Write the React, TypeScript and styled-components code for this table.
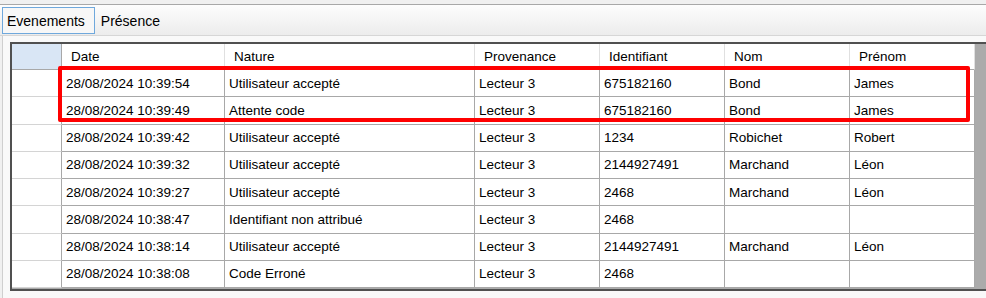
import styled, { createGlobalStyle, css } from "styled-components";

type EventRow = {
  date: string;
  nature: string;
  provenance: string;
  identifiant: string;
  nom: string;
  prenom: string;
};

const columns = ["Date", "Nature", "Provenance", "Identifiant", "Nom", "Prénom"];

const rows: EventRow[] = [
  { date: "28/08/2024 10:39:54", nature: "Utilisateur accepté", provenance: "Lecteur 3", identifiant: "675182160", nom: "Bond", prenom: "James" },
  { date: "28/08/2024 10:39:49", nature: "Attente code", provenance: "Lecteur 3", identifiant: "675182160", nom: "Bond", prenom: "James" },
  { date: "28/08/2024 10:39:42", nature: "Utilisateur accepté", provenance: "Lecteur 3", identifiant: "1234", nom: "Robichet", prenom: "Robert" },
  { date: "28/08/2024 10:39:32", nature: "Utilisateur accepté", provenance: "Lecteur 3", identifiant: "2144927491", nom: "Marchand", prenom: "Léon" },
  { date: "28/08/2024 10:39:27", nature: "Utilisateur accepté", provenance: "Lecteur 3", identifiant: "2468", nom: "Marchand", prenom: "Léon" },
  { date: "28/08/2024 10:38:47", nature: "Identifiant non attribué", provenance: "Lecteur 3", identifiant: "2468", nom: "", prenom: "" },
  { date: "28/08/2024 10:38:14", nature: "Utilisateur accepté", provenance: "Lecteur 3", identifiant: "2144927491", nom: "Marchand", prenom: "Léon" },
  { date: "28/08/2024 10:38:08", nature: "Code Erroné", provenance: "Lecteur 3", identifiant: "2468", nom: "", prenom: "" },
];

const App = () => {
  return (
    <>
      <GlobalStyle />
      <Window>
        <TabStrip>
          <Tab selected>Evenements</Tab>
          <Tab>Présence</Tab>
        </TabStrip>
        <TabPage>
          <GridFrame>
            <Grid>
              <CornerCell />
              {columns.map((c) => (
                <HeaderCell key={c}>{c}</HeaderCell>
              ))}
              {rows.map((r, i) => (
                <RowGroup key={i} row={r} />
              ))}
            </Grid>
            <Highlight />
          </GridFrame>
        </TabPage>
      </Window>
    </>
  );
};

const RowGroup = ({ row }: { row: EventRow }) => {
  return (
    <>
      <RowHeaderCell />
      <Cell>{row.date}</Cell>
      <Cell>{row.nature}</Cell>
      <Cell>{row.provenance}</Cell>
      <Cell>{row.identifiant}</Cell>
      <Cell>{row.nom}</Cell>
      <Cell>{row.prenom}</Cell>
    </>
  );
};

const GlobalStyle = createGlobalStyle`
  html, body {
    margin: 0;
    padding: 0;
    width: 986px;
    height: 298px;
    overflow: hidden;
    background: #f0f0f0;
    font-family: "Liberation Sans", Arial, sans-serif;
    color: #000;
  }
`;

const Window = styled.div`
  width: 986px;
  height: 298px;
  padding-top: 4px;
  box-sizing: border-box;
  display: flex;
  flex-direction: column;
`;

const TabStrip = styled.div`
  height: 32px;
  box-sizing: border-box;
  border-top: 1px solid #a8a8a8;
  border-bottom: 1px solid #d6d6d6;
  background: linear-gradient(#fdfdfd, #ececec);
  display: flex;
  align-items: flex-start;
  padding: 2px 0 0 2px;
`;

const Tab = styled.div<{ selected?: boolean }>`
  height: 27px;
  box-sizing: border-box;
  padding: 0 9px 0 4px;
  display: flex;
  align-items: center;
  font-size: 14px;
  border: 1px solid transparent;
  ${(props) =>
    props.selected
      ? css`
          border-color: #6fa8dc;
          background: #f7f7f7;
        `
      : css`
          padding-left: 5px;
        `}
`;

const TabPage = styled.div`
  flex: 1;
  margin-left: 2px;
  border-left: 1px solid #cfcfcf;
  background: #f9f9f9;
  padding: 6px 0 0 7px;
  overflow: hidden;
`;

const GridFrame = styled.div`
  position: relative;
  width: 990px;
  height: 249px;
  box-sizing: border-box;
  border: 2px solid #505050;
  background: #ababab;
  overflow: hidden;
`;

const Grid = styled.div`
  display: grid;
  width: 963px;
  grid-template-columns: 50px 163px 250px 125px 125px 125px 125px;
  grid-template-rows: 26px;
  grid-auto-rows: 27.25px;
  background: #fff;
  font-size: 13.5px;
`;

const CornerCell = styled.div`
  background: #d9e6f5;
  border-right: 1px solid #a8a8a8;
  border-bottom: 1px solid #a8a8a8;
`;

const HeaderCell = styled.div`
  display: flex;
  align-items: center;
  padding-left: 9px;
  background: #fff;
  border-right: 1px solid #e0e0e0;
  border-bottom: 1px solid #a8a8a8;
  white-space: nowrap;
`;

const RowHeaderCell = styled.div`
  background: #fff;
  border-right: 1px solid #a8a8a8;
  border-bottom: 1px solid #d4d4d4;
`;

const Cell = styled.div`
  display: flex;
  align-items: center;
  padding-left: 4px;
  background: #fff;
  border-right: 1px solid #a8a8a8;
  border-bottom: 1px solid #a8a8a8;
  white-space: nowrap;
  overflow: hidden;
`;

const Highlight = styled.div`
  position: absolute;
  left: 46px;
  top: 22px;
  width: 912px;
  height: 56px;
  box-sizing: border-box;
  border: 4px solid #ff0000;
  border-radius: 2px;
  pointer-events: none;
`;

export default App;
